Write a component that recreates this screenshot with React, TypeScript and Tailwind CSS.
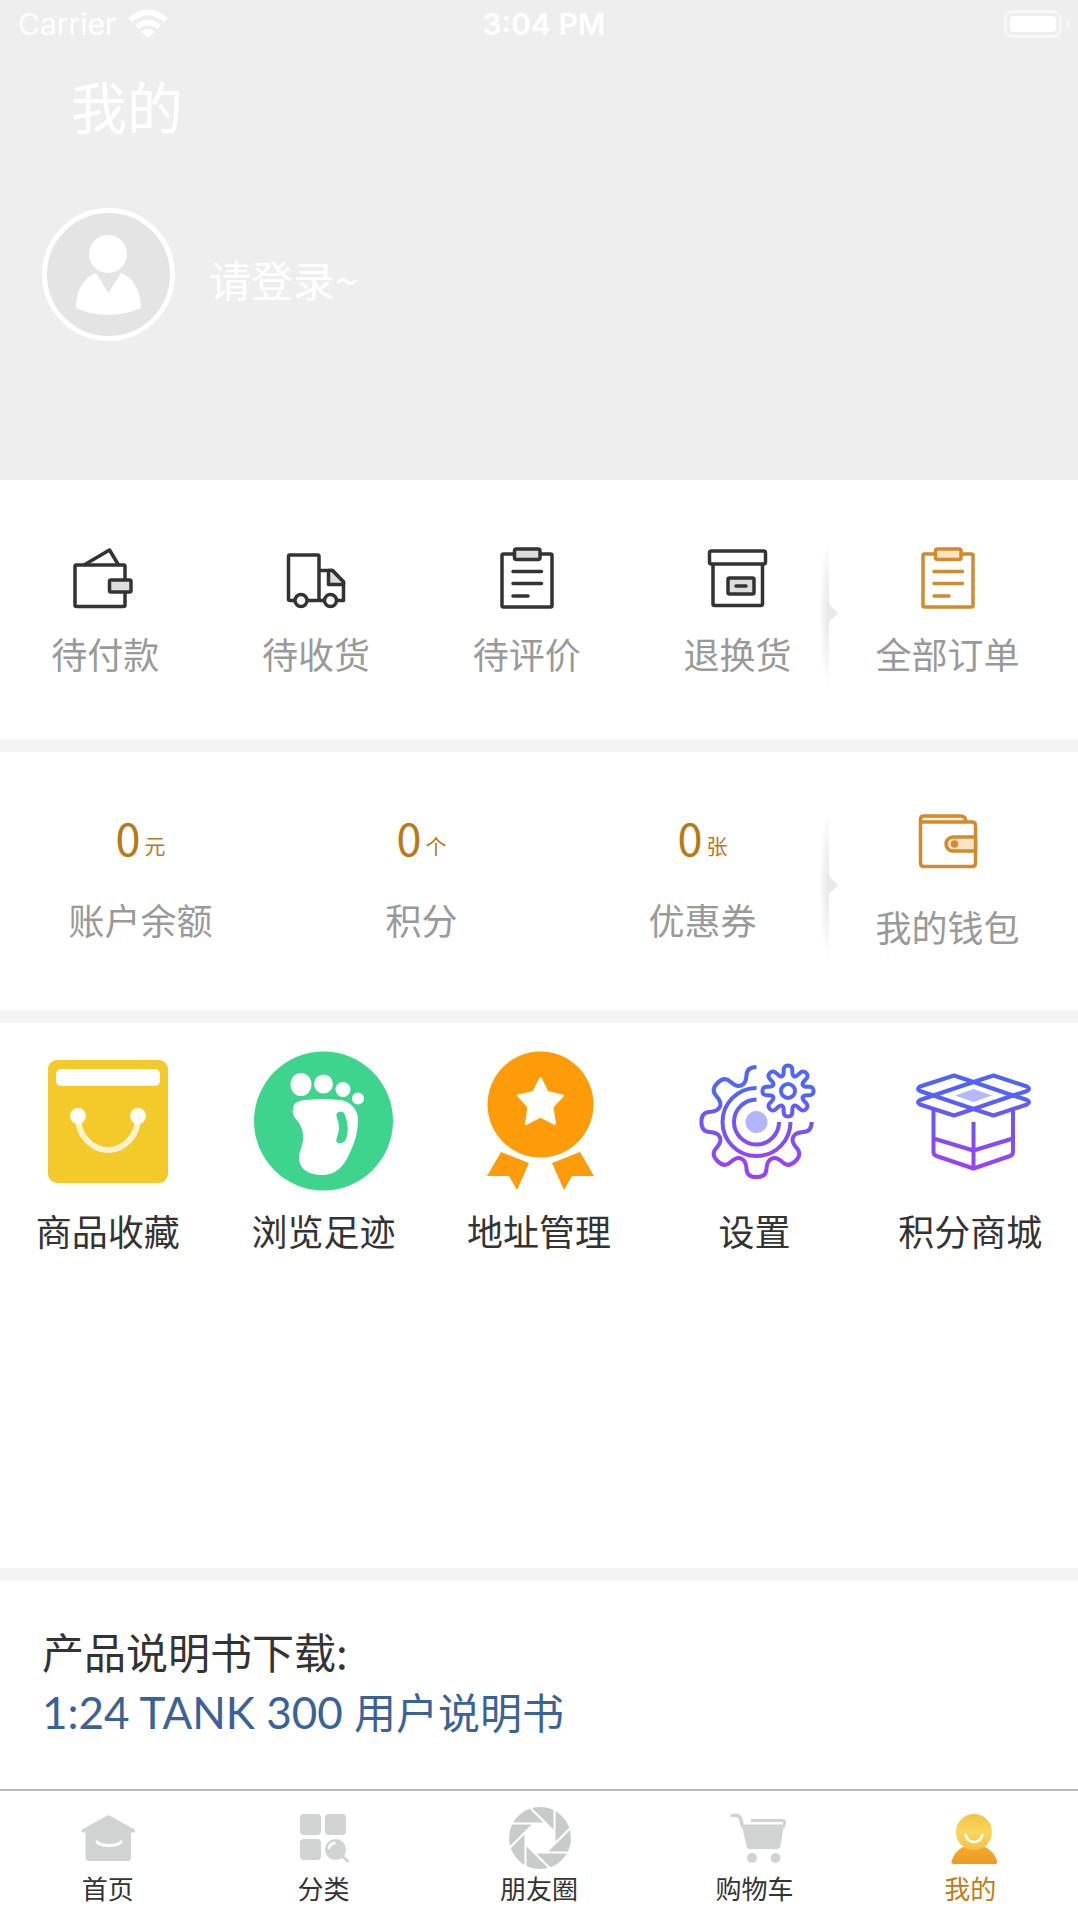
import React, { useState } from 'react';

type IconProps = { className?: string };

const DARK = '#333333';
const GOLD = '#d18a2c';
const TAB_GREY = '#d1d3d2';

// Rounded gear outline. The path starts on top of the first tooth and runs counter-clockwise.
const gearPath = (cx: number, cy: number, inner: number, outer: number, count: number, closed: boolean) => {
  const points: number[][] = [];
  const add = (radius: number, deg: number) => {
    const rad = (deg * Math.PI) / 180;
    points.push([cx + radius * Math.cos(rad), cy + radius * Math.sin(rad)]);
  };
  for (let i = 0; i < count; i++) {
    const a = -90 - i * 45;
    add(inner, a + 15);
    add(outer, a + 10);
    add(outer, a - 10);
    add(inner, a - 15);
  }
  const used = closed ? [...points, ...points.slice(0, 3)].slice(1) : points.slice(1, points.length - 1);
  const mid = (a: number[], b: number[]) => `${((a[0] + b[0]) / 2).toFixed(1)} ${((a[1] + b[1]) / 2).toFixed(1)}`;
  let d = `M${mid(used[0], used[1])}`;
  for (let i = 1; i < used.length - 1; i++) {
    d += `Q${used[i][0].toFixed(1)} ${used[i][1].toFixed(1)} ${mid(used[i], used[i + 1])}`;
  }
  return closed ? `${d}Z` : d;
};

const PayIcon = ({ className }: IconProps) => (
  <svg className={className} viewBox="0 0 64 64" fill="none" stroke={DARK} strokeWidth="3.5" strokeLinejoin="round">
    <path d="M11 19 36.5 4 45.5 19" />
    <rect x="2" y="19" width="50" height="41.5" rx="1.5" />
    <rect x="36.5" y="34" width="21.5" height="12" rx="1.5" fill="#dddddd" />
  </svg>
);

const TruckIcon = ({ className }: IconProps) => (
  <svg className={className} viewBox="0 0 64 64" fill="none" stroke={DARK} strokeWidth="3.5" strokeLinejoin="round">
    <rect x="4.5" y="9" width="30.5" height="45.5" rx="1.5" />
    <path d="M35 24.5H48.5L59.5 36V54.5H35" />
    <path d="M44.5 24.5V38.5H59.5V36L48.5 24.5Z" fill="#dddddd" />
    <circle cx="17" cy="54.5" r="6" fill="#fff" />
    <circle cx="46.5" cy="54.5" r="6" fill="#fff" />
  </svg>
);

const ClipboardIcon = ({ className, color = DARK, fill = '#dddddd' }: IconProps & { color?: string; fill?: string }) => (
  <svg className={className} viewBox="0 0 64 64" fill="none" stroke={color} strokeWidth="3.5" strokeLinejoin="round">
    <rect x="7" y="8" width="50" height="53" rx="1.5" />
    <rect x="19.5" y="3" width="25.5" height="10.5" rx="2" fill={fill} />
    <path d="M18 25.5H46.5M18 37.5H46.5M18 50H33" strokeLinecap="round" />
  </svg>
);

const ReturnIcon = ({ className }: IconProps) => (
  <svg className={className} viewBox="0 0 64 64" fill="none" stroke={DARK} strokeWidth="3.5" strokeLinejoin="round">
    <path d="M7 18V58Q7 59.5 8.5 59.5H55Q56.5 59.5 56.5 58V18" />
    <rect x="3.5" y="5" width="56" height="13" rx="2" />
    <rect x="22" y="32" width="26" height="16" rx="1.5" fill="#dddddd" />
    <path d="M30 40H40" strokeLinecap="round" />
  </svg>
);

const WalletIcon = ({ className }: IconProps) => (
  <svg className={className} viewBox="0 0 64 64" fill="none" stroke={GOLD} strokeWidth="3.5" strokeLinejoin="round">
    <path d="M4.5 12V9.5Q4.5 6 8 6H44Q50 6 50 11.5" fill="#fbeedb" />
    <path d="M4.5 12H56Q59.5 12 59.5 15.5V53Q59.5 56.5 56 56.5H8Q4.5 56.5 4.5 53Z" fill="#fff" />
    <path d="M59.5 27H37A7 7 0 0 0 37 41H59.5Z" fill="#fae3c2" />
    <circle cx="38.5" cy="34" r="2" fill="#a8701f" />
  </svg>
);

const BagIcon = ({ className }: IconProps) => (
  <svg className={className} viewBox="0 0 140 140">
    <rect x="10" y="9" width="120" height="123" rx="9" fill="#f4ca2b" />
    <rect x="18" y="18" width="104" height="17" rx="5" fill="#fff" />
    <path d="M40 66A30 33 0 0 0 100 66" fill="none" stroke="#fdf4cf" strokeWidth="6" />
    <circle cx="40" cy="65" r="8" fill="#fffdf2" />
    <circle cx="100" cy="65" r="8" fill="#fffdf2" />
  </svg>
);

const FootIcon = ({ className }: IconProps) => (
  <svg className={className} viewBox="0 0 140 140">
    <circle cx="70.5" cy="70" r="69.5" fill="#3ed48e" />
    <g fill="#fff">
      <ellipse cx="48" cy="33.5" rx="10.5" ry="11.5" />
      <circle cx="70.5" cy="33" r="9.5" />
      <circle cx="90" cy="38.5" r="7.5" />
      <circle cx="105" cy="47.5" r="6" />
      <path d="M40 58C40 52 45 50 51 49C62 48 78 48 88 49C98 51 104 58 105 67C105 78 103 89 98 99C92 114 84 124 69 124C56 124 46 118 46 107C46 99 51 93 50 85C50 78 47 73 43 68C40 65 39 62 40 58Z" />
    </g>
    <path d="M86 61Q91 60 92 64Q97 78 93 88Q91 93 85 92Q82 91 84 86Q88 77 84 67Q82 62 86 61Z" fill="#3ed48e" />
  </svg>
);

const MedalIcon = ({ className }: IconProps) => (
  <svg className={className} viewBox="0 0 140 140" fill="#fe9b08">
    <circle cx="71.5" cy="53.5" r="53" />
    <path d="M32 101 60 112 48 139 40 125 18 125Z" />
    <path d="M111 101 83 112 95 139 103 125 125 125Z" />
    <path
      d="M71.5 27 78.5 41 94 44.500 83.500 56 86 73 71.5 65.500 57 73 59.500 56 49 44.500 64.500 41Z"
      fill="#fff"
      stroke="#fff"
      strokeWidth="2"
      strokeLinejoin="round"
    />
  </svg>
);

const GearIcon = ({ className }: IconProps) => (
  <svg className={className} viewBox="0 0 140 140" fill="none" stroke="url(#gear-ink)" strokeWidth="4">
    <defs>
      <linearGradient id="gear-ink" gradientUnits="userSpaceOnUse" x1="0" y1="40" x2="0" y2="110">
        <stop offset="0" stopColor="#5065fa" />
        <stop offset="1" stopColor="#9742f8" />
      </linearGradient>
    </defs>
    <circle cx="71.5" cy="71" r="11" fill="#b2b4fd" stroke="none" />
    <path d="M71.5 48.5A22.5 22.5 0 1 0 94 71" />
    <path d="M71.5 37A34 34 0 1 0 105.5 71" />
    <path d={gearPath(71.5, 71, 40, 56, 7, false)} />
    <path d={gearPath(103, 40, 16, 26, 8, true)} />
    <circle cx="103" cy="40" r="7" />
  </svg>
);

const BoxIcon = ({ className }: IconProps) => (
  <svg className={className} viewBox="0 0 140 140" fill="none" stroke="url(#box-ink)" strokeWidth="4" strokeLinejoin="round">
    <defs>
      <linearGradient id="box-ink" gradientUnits="userSpaceOnUse" x1="0" y1="40" x2="0" y2="110">
        <stop offset="0" stopColor="#4f63fa" />
        <stop offset="1" stopColor="#9742f8" />
      </linearGradient>
    </defs>
    <path d="M73.5 38 92 44.5 73.5 51 55 44.5Z" fill="#b6b8fb" stroke="none" />
    <path d="M73.5 31 54 24.5 20 35.5Q16 38 20 40L73.5 58 113 44.5Z" />
    <path d="M73.5 31 93.5 24.5 127 35.5Q131 38 127 40L113 44.5" />
    <path d="M73.5 31 20 49Q16 51 20 53.5L54 64.5 73.5 58" />
    <path d="M113 44.5 127 49Q131 51 127 53.5L93.5 64.5 73.5 58" />
    <path d="M33.5 58V101Q33.5 104 36.5 105L73.5 117.5 110 105Q113 104 113 101V58" />
    <path d="M73.5 71V117.5M33.5 87.5 73.5 99.5 113 87.5" />
  </svg>
);

const HomeIcon = ({ className }: IconProps) => (
  <svg className={className} viewBox="0 0 64 64" fill={TAB_GREY}>
    <path d="M30.5 10Q32.5 8.5 34.5 10L58.5 23.5Q60.5 26 57.5 26.5H55V51.5Q55 55 51.5 55H13Q9.5 55 9.5 51.5V26.5H7Q4 26 6 23.5Z" />
    <path d="M21 36Q24 39.5 33 39.5T45 36" fill="none" stroke="#fff" strokeWidth="3" strokeLinecap="round" />
  </svg>
);

const CategoryIcon = ({ className }: IconProps) => (
  <svg className={className} viewBox="0 0 64 64" fill={TAB_GREY}>
    <rect x="9" y="8" width="21" height="21" rx="4" />
    <rect x="34" y="8" width="21" height="21" rx="4" />
    <rect x="9" y="33" width="21" height="21" rx="4" />
    <circle cx="44.5" cy="43.5" r="10.5" />
    <path d="M51 50 56.5 55" stroke={TAB_GREY} strokeWidth="3" strokeLinecap="round" />
    <path d="M38 42Q39 38 43.5 37" stroke="#fff" strokeWidth="2.5" strokeLinecap="round" fill="none" />
  </svg>
);

const ApertureIcon = ({ className }: IconProps) => (
  <svg className={className} viewBox="0 0 64 64">
    <circle cx="33" cy="32" r="31" fill="#c9cbca" />
    <path d="M27 17.5H39L47.5 26V38L39 46.5H27L18.5 38V26Z" fill="#fff" />
    <g stroke="#fff" strokeWidth="2">
      {[0, 45, 90, 135, 180, 225, 270, 315].map((angle) => (
        <path key={angle} d="M39 17.5H3" transform={`rotate(${angle} 33 32)`} />
      ))}
    </g>
  </svg>
);

const CartIcon = ({ className }: IconProps) => (
  <svg className={className} viewBox="0 0 64 64" fill={TAB_GREY}>
    <path d="M9 9.5H13Q17 9.5 18 14L19.5 20" fill="none" stroke={TAB_GREY} strokeWidth="3.5" strokeLinecap="round" />
    <path d="M18.5 18.5H61L57.5 40Q57 43 54 43H27Q24 43 23.5 40Z" />
    <path d="M29 14.5H59.5Q62 14.5 61.5 17L60.5 21" fill="none" stroke={TAB_GREY} strokeWidth="3" strokeLinecap="round" />
    <circle cx="29" cy="52" r="5" />
    <circle cx="52.5" cy="52" r="5" />
  </svg>
);

const MeIcon = ({ className }: IconProps) => (
  <svg className={className} viewBox="0 0 64 64">
    <defs>
      <linearGradient id="me-head" x1="0" y1="0" x2="0" y2="1">
        <stop offset="0" stopColor="#f2c445" />
        <stop offset="0.5" stopColor="#f9d65c" />
        <stop offset="1" stopColor="#f5c043" />
      </linearGradient>
      <linearGradient id="me-body" x1="0" y1="0" x2="0" y2="1">
        <stop offset="0" stopColor="#f6a92f" />
        <stop offset="1" stopColor="#ee9a22" />
      </linearGradient>
    </defs>
    <path d="M25 41H47Q56 45 59 55Q60 58 57 58H16Q13 58 13.5 55Q17 45 25 41Z" fill="url(#me-body)" />
    <circle cx="36" cy="26" r="18" fill="url(#me-head)" />
    <path d="M27.500 29Q30 36 36 36T44.500 29" fill="none" stroke="#fff" strokeWidth="2.5" strokeLinecap="round" />
  </svg>
);

const orders = [
  { label: '待付款', Icon: PayIcon },
  { label: '待收货', Icon: TruckIcon },
  { label: '待评价', Icon: ClipboardIcon },
  { label: '退换货', Icon: ReturnIcon },
];

const assets = [
  { label: '账户余额', value: 0, unit: '元' },
  { label: '积分', value: 0, unit: '个' },
  { label: '优惠券', value: 0, unit: '张' },
];

const menus = [
  { label: '商品收藏', Icon: BagIcon },
  { label: '浏览足迹', Icon: FootIcon },
  { label: '地址管理', Icon: MedalIcon },
  { label: '设置', Icon: GearIcon },
  { label: '积分商城', Icon: BoxIcon },
];

const tabs = [
  { label: '首页', Icon: HomeIcon },
  { label: '分类', Icon: CategoryIcon },
  { label: '朋友圈', Icon: ApertureIcon },
  { label: '购物车', Icon: CartIcon },
  { label: '我的', Icon: MeIcon },
];

// Soft shadow with a small arrow, laid over the edge of the right column
const Divider = () => (
  <svg className="absolute -left-8 top-[53px] h-40 w-8" viewBox="0 0 32 160" aria-hidden="true">
    <defs>
      <radialGradient id="edge" gradientUnits="userSpaceOnUse" cx="0" cy="0" r="1" gradientTransform="translate(18 80) scale(10 76)">
        <stop offset="0" stopColor="#000" stopOpacity="0.1" />
        <stop offset="1" stopColor="#000" stopOpacity="0" />
      </radialGradient>
    </defs>
    <rect width="18" height="160" fill="url(#edge)" />
    <path d="M17 70 27 80 17 90Z" fill="#e9e9e9" />
  </svg>
);

const App: React.FC = () => {
  const [activeTab, setActiveTab] = useState('我的');

  return (
    <div className="flex min-h-screen flex-col bg-white font-['Noto_Sans_CJK_SC',sans-serif] text-[#333333]">
      <header className="bg-[#eeeeee] pb-[139px] text-white">
        <div className="grid h-12 grid-cols-3 items-center pl-[18px] pr-2 font-[Inter,sans-serif] text-[30px]">
          <div className="flex items-center gap-3">
            <span>Carrier</span>
            <svg className="h-7 w-10" viewBox="0 0 40 28" fill="none" stroke="#fff" strokeWidth="5.5">
              <path d="M2 10Q20 -5 38 10" />
              <path d="M9 17Q20 8 31 17" />
              <path d="M13 21.5Q20 16 27 21.5L20 28Z" fill="#fff" stroke="none" />
            </svg>
          </div>
          <span className="text-center font-semibold">3:04 PM</span>
          <div className="flex items-center justify-end gap-1">
            <div className="h-7 w-[58px] rounded-lg border-3 border-[#f6f6f6] p-[3px]">
              <div className="h-full rounded-sm bg-white" />
            </div>
            <div className="h-2 w-1 rounded-r-full bg-[#f6f6f6]" />
          </div>
        </div>

        <h1 className="mt-[23px] pl-[71px] text-[56px] leading-[68px]">我的</h1>

        <div className="mt-[69px] flex items-center gap-[34px] pl-[42px]">
          <svg className="size-[133px]" viewBox="0 0 133 133" role="img" aria-label="头像">
            <circle cx="66.5" cy="66.5" r="64" fill="#e4e4e4" stroke="#fff" strokeWidth="5" />
            <circle cx="66" cy="46" r="19" fill="#fff" />
            <path d="M54 65 66.5 85 79 65C91 69 99 83 99 100Q83 107 66 107T34 100C34 83 42 69 54 65Z" fill="#fff" />
          </svg>
          <button type="button" className="pt-2 text-[42px] leading-[52px]">请登录~</button>
        </div>
      </header>

      <section className="flex border-b-[13px] border-[#f4f4f4]">
        <div className="grid flex-1 grid-cols-4">
          {orders.map(({ label, Icon }) => (
            <button key={label} type="button" className="flex flex-col items-center pt-[66px] pb-16">
              <Icon className="size-16" />
              <span className="mt-[21px] text-4xl leading-[44px] text-[#999999]">{label}</span>
            </button>
          ))}
        </div>
        <div className="relative w-[235px] pr-[26px]">
          <Divider />
          <button type="button" className="flex w-full flex-col items-center pt-[66px]">
            <ClipboardIcon className="size-16" color={GOLD} fill="#fae3c2" />
            <span className="mt-[21px] text-4xl leading-[44px] text-[#999999]">全部订单</span>
          </button>
        </div>
      </section>

      <section className="flex border-b-[13px] border-[#f4f4f4]">
        <div className="grid flex-1 grid-cols-3">
          {assets.map((asset) => (
            <button key={asset.label} type="button" className="flex flex-col items-center pt-[59px] pb-[69px]">
              <span className="flex items-end gap-1 text-[#b97716]">
                <span className="text-[45px] leading-[52px]">{asset.value}</span>
                <span className="text-[21px] leading-9">{asset.unit}</span>
              </span>
              <span className="mt-[34px] text-4xl leading-[44px] text-[#999999]">{asset.label}</span>
            </button>
          ))}
        </div>
        <div className="relative w-[235px] pr-[26px]">
          <Divider />
          <button type="button" className="flex w-full flex-col items-center pt-[58px]">
            <WalletIcon className="size-16" />
            <span className="mt-[30px] text-4xl leading-[44px] text-[#999999]">我的钱包</span>
          </button>
        </div>
      </section>

      <section className="flex-1 border-b-[13px] border-[#f4f4f4]">
        <div className="grid grid-cols-5 pt-7">
          {menus.map(({ label, Icon }) => (
            <button key={label} type="button" className="flex flex-col items-center">
              <Icon className="size-[140px]" />
              <span className="mt-[17px] text-4xl leading-[44px]">{label}</span>
            </button>
          ))}
        </div>
      </section>

      <section className="px-[42px] pt-10 pb-[47px] text-[42px] leading-[60px]">
        <p>产品说明书下载:</p>
        <a href="#manual" className="block text-[#3a6297]">
          <span className="font-[Lato,sans-serif] text-[44px]">1:24 TANK 300 </span>用户说明书
        </a>
      </section>

      <nav className="grid grid-cols-5 border-t-2 border-[#b9b9b9] pt-[15px] pb-3.5">
        {tabs.map(({ label, Icon }) => (
          <button
            key={label}
            type="button"
            onClick={() => setActiveTab(label)}
            className={`flex flex-col items-center gap-0.5 text-[26px] leading-8 ${activeTab === label ? 'text-[#c47a14]' : 'text-[#333333]'}`}
          >
            <Icon className="size-16" />
            <span>{label}</span>
          </button>
        ))}
      </nav>
    </div>
  );
};

export default App;
